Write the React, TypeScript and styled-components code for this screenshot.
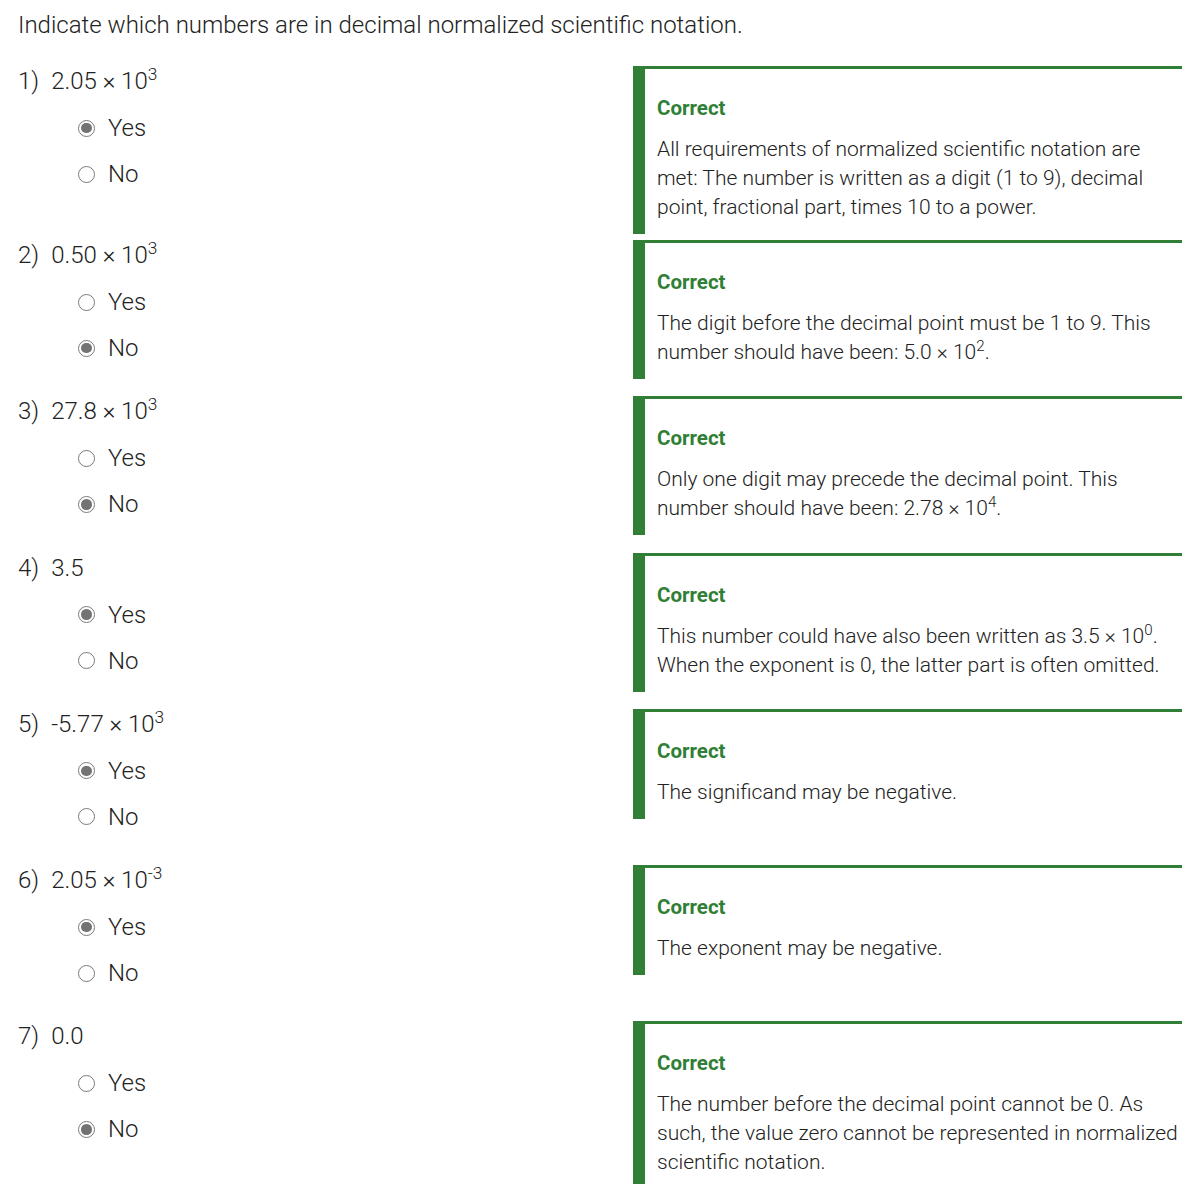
import React from "react";
import styled, { createGlobalStyle } from "styled-components";

const GlobalStyle = createGlobalStyle`
  html, body { margin: 0; padding: 0; background: #fff; }
  body { font-family: Roboto, "Noto Sans", sans-serif; color: #222; }
`;

const Page = styled.div`
  padding: 10px 6px 0 18px;
  width: 1164px;
`;

const Title = styled.div`
  font-size: 24px;
  font-weight: 300;
  line-height: 30px;
  color: #222;
  margin-bottom: 26px;
`;

const Row = styled.div`
  display: grid;
  grid-template-columns: 615px 1fr;
  align-items: start;
  margin-bottom: 6px;
`;

const Left = styled.div`
  min-height: 150.25px;
`;

const Question = styled.div`
  display: flex;
  gap: 12px;
  font-size: 24px;
  font-weight: 300;
  line-height: 30px;
  color: #222;
`;

const Options = styled.div`
  display: flex;
  flex-direction: column;
  padding-left: 60px;
  padding-top: 9px;
`;

const Option = styled.label`
  display: flex;
  align-items: center;
  gap: 13px;
  height: 46px;
  font-size: 24px;
  font-weight: 300;
  color: #222;
`;

const Radio = styled.span<{ $checked?: boolean }>`
  width: 17px;
  height: 17px;
  box-sizing: border-box;
  border-radius: 50%;
  border: 1.5px solid #7a7a7a;
  display: flex;
  align-items: center;
  justify-content: center;
  &::after {
    content: "";
    display: ${(p) => (p.$checked ? "block" : "none")};
    width: 10.5px;
    height: 10.5px;
    border-radius: 50%;
    background: #737373;
  }
`;

const Feedback = styled.div`
  border-top: 3px solid #317f37;
  border-left: 12px solid #317f37;
  padding: 25px 4px 12px 12px;
`;

const Heading = styled.div`
  font-size: 20.5px;
  font-weight: 700;
  line-height: 28px;
  color: #317f37;
  margin-bottom: 13px;
`;

const Body = styled.div`
  font-size: 21px;
  font-weight: 300;
  line-height: 29px;
  color: #222;
`;

const Sup = styled.sup`
  font-size: 0.72em;
  line-height: 0;
  vertical-align: 0.5em;
`;

type Item = {
  n: number;
  q: React.ReactNode;
  yes: boolean;
  text: React.ReactNode;
};

const items: Item[] = [
  {
    n: 1,
    q: <>2.05 × 10<Sup>3</Sup></>,
    yes: true,
    text: <>All requirements of normalized scientific notation are met: The number is written as a digit (1 to 9), decimal point, fractional part, times 10 to a power.</>,
  },
  {
    n: 2,
    q: <>0.50 × 10<Sup>3</Sup></>,
    yes: false,
    text: <>The digit before the decimal point must be 1 to 9. This number should have been: 5.0 × 10<Sup>2</Sup>.</>,
  },
  {
    n: 3,
    q: <>27.8 × 10<Sup>3</Sup></>,
    yes: false,
    text: <>Only one digit may precede the decimal point. This number should have been: 2.78 × 10<Sup>4</Sup>.</>,
  },
  {
    n: 4,
    q: <>3.5</>,
    yes: true,
    text: <>This number could have also been written as 3.5 × 10<Sup>0</Sup>. When the exponent is 0, the latter part is often omitted.</>,
  },
  {
    n: 5,
    q: <>-5.77 × 10<Sup>3</Sup></>,
    yes: true,
    text: <>The significand may be negative.</>,
  },
  {
    n: 6,
    q: <>2.05 × 10<Sup>-3</Sup></>,
    yes: true,
    text: <>The exponent may be negative.</>,
  },
  {
    n: 7,
    q: <>0.0</>,
    yes: false,
    text: <>The number before the decimal point cannot be 0. As such, the value zero cannot be represented in normalized scientific notation.</>,
  },
];

export default function App() {
  return (
    <Page>
      <GlobalStyle />
      <Title>Indicate which numbers are in decimal normalized scientific notation.</Title>
      {items.map((it) => (
        <Row key={it.n}>
          <Left>
            <Question>
              <span>{it.n})</span>
              <span>{it.q}</span>
            </Question>
            <Options>
              <Option>
                <Radio $checked={it.yes} />
                Yes
              </Option>
              <Option>
                <Radio $checked={!it.yes} />
                No
              </Option>
            </Options>
          </Left>
          <Feedback>
            <Heading>Correct</Heading>
            <Body>{it.text}</Body>
          </Feedback>
        </Row>
      ))}
    </Page>
  );
}
